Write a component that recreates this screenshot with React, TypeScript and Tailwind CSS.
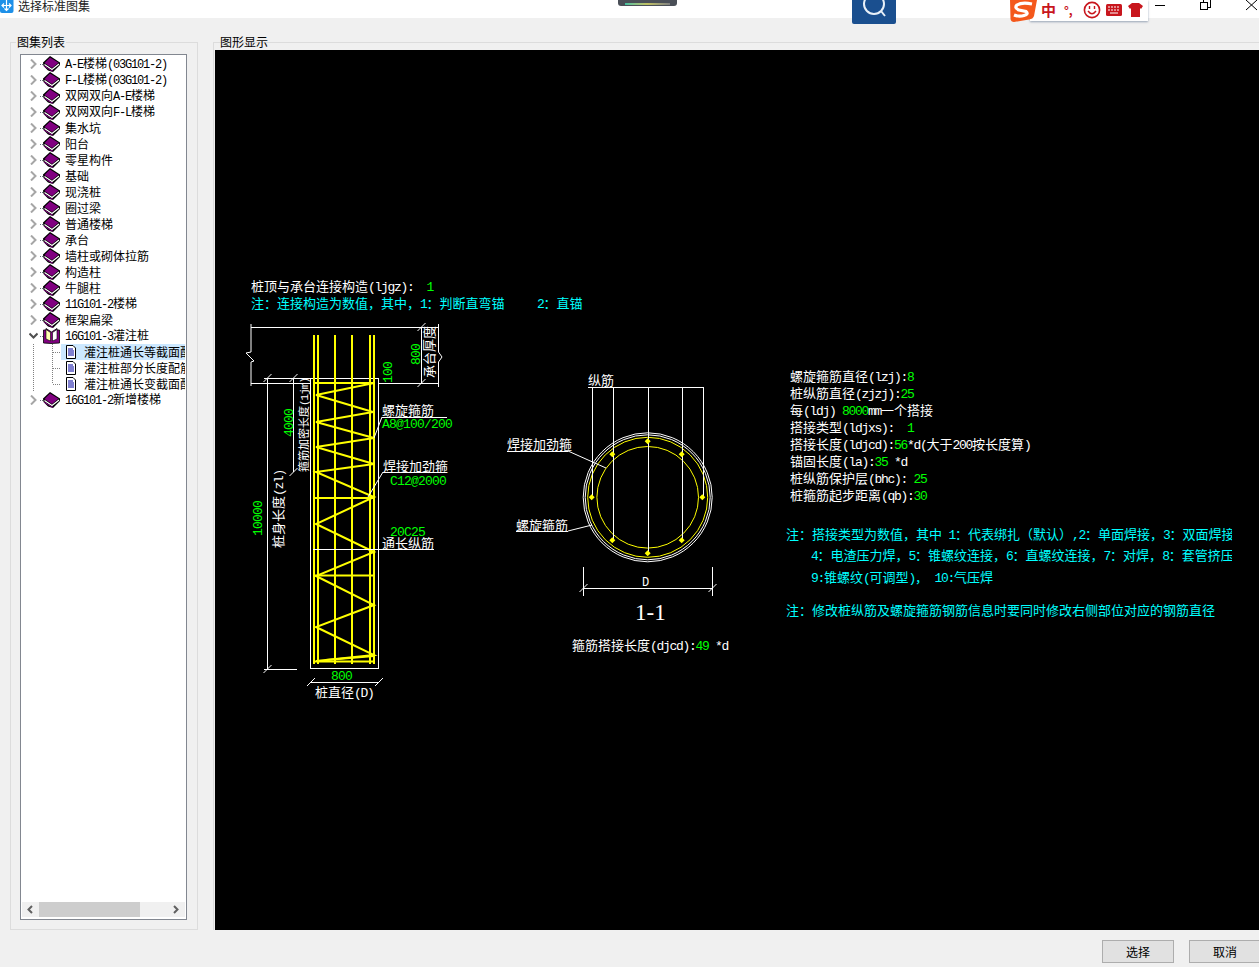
import React from "react";

const books = [
  "A-E楼梯(03G101-2)",
  "F-L楼梯(03G101-2)",
  "双网双向A-E楼梯",
  "双网双向F-L楼梯",
  "集水坑",
  "阳台",
  "零星构件",
  "基础",
  "现浇桩",
  "圈过梁",
  "普通楼梯",
  "承台",
  "墙柱或砌体拉筋",
  "构造柱",
  "牛腿柱",
  "11G101-2楼梯",
  "框架扁梁",
];

const leaves = ["灌注桩通长等截面配筋", "灌注桩部分长度配筋", "灌注桩通长变截面配筋"];

// SimSun style text: latin is half the width of a CJK glyph
const Runs = ({ text, small }: { text: string; small?: boolean }) => (
  <>
    {text.split(/([\x20-\x7e]+)/).map((run, i) =>
      run === "" ? null : /^[\x20-\x7e]/.test(run) ? (
        <span key={i} className={small ? "font-['Liberation_Mono'] text-[12px] tracking-[-1.2px]" : "font-['Liberation_Mono'] text-[13px] tracking-[-1.3px]"}>
          {run}
        </span>
      ) : (
        <span key={i}>{run}</span>
      )
    )}
  </>
);

const Chevron = ({ open }: { open?: boolean }) => (
  <svg width="9" height="10" viewBox="0 0 9 10" className="shrink-0">
    {open ? (
      <path d="M0.5 2.5 L4.5 6.5 L8.5 2.5" fill="none" stroke="#505050" strokeWidth="2" />
    ) : (
      <path d="M2 0.5 L6.5 5 L2 9.5" fill="none" stroke="#a6a6a6" strokeWidth="2" />
    )}
  </svg>
);

const BookIcon = () => (
  <svg width="17" height="16" viewBox="0 0 17 16" className="shrink-0">
    <path d="M7 0 L17 6.5 L17 9 L10 16 L5 14.5 L0.5 10 L0 6.5 Z" fill="#000" />
    <path d="M7 1.5 L15.5 6.8 L9 12 L1.5 7 Z" fill="#800080" />
    <path d="M1.5 8.5 L9 13.5 L16 8" fill="none" stroke="#fff" strokeWidth="1.2" />
    <path d="M1 10 L9 15 L10 15" fill="none" stroke="#800080" strokeWidth="1" />
  </svg>
);

const OpenBookIcon = () => (
  <svg width="17" height="16" viewBox="0 0 17 16" className="shrink-0">
    <path d="M0.5 2 L0.5 15 L8 15.5 L16.5 15 L16.5 2 L14 2 L14 0.5 L8.5 4 L3 0.5 L3 2 Z" fill="#800080" stroke="#000" strokeWidth="0.8" />
    <path d="M3 1.5 L7.5 4.5 L7.5 13 L3 11 Z" fill="#ffffb0" stroke="#000" strokeWidth="0.6" />
    <path d="M14 1.5 L9.5 4.5 L9.5 13 L14 11 Z" fill="#fff" stroke="#000" strokeWidth="0.6" />
  </svg>
);

const DocIcon = () => (
  <svg width="12" height="14" viewBox="0 0 12 14" className="shrink-0">
    <path d="M1.5 0.5 H8 L10.5 3 V13.5 H1.5 Z" fill="#fff" stroke="#000" />
    <path d="M3 4 H8 M3 6 H9 M3 8 H9 M3 10 H9" stroke="#0000a0" />
  </svg>
);

const Tree = () => (
  <div className="flex flex-col pt-[1px] text-[12px] leading-[16px] text-black">
    {books.map((name) => (
      <div key={name} className="flex h-[16px] items-center whitespace-pre pl-[8px]">
        <Chevron />
        <span className="ml-[2px] w-[3px] border-t border-dotted border-gray-500" />
        <BookIcon />
        <span className="ml-[5px]">
          <Runs text={name} small />
        </span>
      </div>
    ))}
    <div className="flex h-[16px] items-center whitespace-pre pl-[8px]">
      <Chevron open />
      <span className="ml-[2px] w-[3px] border-t border-dotted border-gray-500" />
      <OpenBookIcon />
      <span className="ml-[5px]">
        <Runs text="16G101-3灌注桩" small />
      </span>
    </div>
    {leaves.map((name, i) => (
      <div key={name} className="flex h-[16px] items-center whitespace-pre">
        <svg width="40" height="16" viewBox="0 0 40 16" className="shrink-0">
          <path d="M12.5 0 V16" stroke="#808080" strokeDasharray="1 1" />
          <path d={i === 2 ? "M31.5 0 V8" : "M31.5 0 V16"} stroke="#808080" strokeDasharray="1 1" />
          <path d="M32 8.5 H40" stroke="#808080" strokeDasharray="1 1" />
        </svg>
        <span className={i === 0 ? "flex h-[16px] w-[124px] items-center overflow-hidden bg-[#cce8ff] pl-[4px]" : "flex h-[16px] w-[124px] items-center overflow-hidden pl-[4px]"}>
          <DocIcon />
          <span className="ml-[7px]">{name}</span>
        </span>
      </div>
    ))}
    <div className="flex h-[16px] items-center whitespace-pre pl-[8px]">
      <Chevron />
      <span className="ml-[2px] w-[3px] border-t border-dotted border-gray-500" />
      <BookIcon />
      <span className="ml-[5px]">
        <Runs text="16G101-2新增楼梯" small />
      </span>
    </div>
  </div>
);

const zigzag =
  "374,383 316,395 373,412 316,422 374,438 316,447 374,464 316,472 374,497 316,524 374,552 316,576 374,605 316,627 374,655 316,661";

const rodDots = [
  [647.7, 441.3],
  [612.3, 454.3],
  [681.7, 454.3],
  [591.7, 497.3],
  [702.3, 497.3],
  [612.3, 540.3],
  [681.7, 540.3],
  [647.7, 553.3],
];

const CJK = "'Noto Sans CJK SC', sans-serif";
const MONO = "'Liberation Mono', monospace";

// tick across a dimension line end
const Tick = ({ x, y }: { x: number; y: number }) => <path d={`M${x - 4} ${y + 4} L${x + 4} ${y - 4}`} stroke="#fff" shapeRendering="auto" />;

const Drawing = () => (
  <svg className="absolute left-0 top-0" width="1044" height="880" viewBox="215 50 1044 880" shapeRendering="crispEdges">
    {/* pile cap */}
    <g fill="none" stroke="#fff">
      <path d="M251 324 V352 L246 353 L254 361 L251 362 V386" shapeRendering="auto" />
      <path d="M251 327.5 H438.5" />
      <path d="M251 383.5 H311 M379 383.5 H438.5" />
      <path d="M438.5 324 V352 L442 357 L438.5 362 V387" shapeRendering="auto" />
      <path d="M421.5 327 V383" />
      <rect x="310.5" y="378.5" width="68" height="290" />
      <path d="M264 378.5 H311 M267.5 378 V669 M264 669.5 H297 M293.5 378 V472" />
      <path d="M311 682.5 H379" />
    </g>
    <Tick x={421.5} y={327} />
    <Tick x={421.5} y={383} />
    <Tick x={267.5} y={378} />
    <Tick x={267.5} y={669} />
    <Tick x={293.5} y={378} />
    <Tick x={293.5} y={472} />
    <Tick x={311} y={682} />
    <Tick x={379} y={682} />

    {/* rebars */}
    <g stroke="#ffff00" strokeWidth="2" fill="none" shapeRendering="auto">
      <path d="M314 335 V664 M318 335 V664 M335 335 V664 M352 335 V664 M370 335 V664 M374 335 V664" />
      <path d="M314 383 H374 M314 498 H374 M314 575.5 H374 M314 661.5 H374" />
      <polyline points={zigzag} />
      <path d="M326 660 L374 656" />
    </g>

    {/* leaders */}
    <g stroke="#fff" fill="none">
      <path d="M382 417.5 H447 M382 417 L374 438" shapeRendering="auto" />
      <path d="M383 472.5 H447 M383 472 L368 497" shapeRendering="auto" />
      <path d="M313 549.5 H434" />
    </g>

    {/* section 1-1 */}
    <g fill="none" shapeRendering="auto">
      <circle cx="647.7" cy="497.3" r="64.5" stroke="#fff" />
      <circle cx="647.7" cy="497.3" r="62.5" stroke="#fff" />
      <circle cx="647.7" cy="497.3" r="60" stroke="#ffff00" />
      <circle cx="647.7" cy="497.3" r="50.8" stroke="#ffff00" />
    </g>
    <g stroke="#fff" fill="none">
      <path d="M588 387.5 H703.5 M592.5 387 V497 M613.5 387 V540 M648.5 387 V553 M682.5 387 V540 M703.5 387 V497" />
      <path d="M507 451.5 H568 M516 531.5 H568" />
      <path d="M568 451 L606 468 M568 531 L592 525" shapeRendering="auto" />
      <path d="M583.5 567 V596 M712.5 567 V596 M583 588.5 H713" />
    </g>
    <Tick x={583.5} y={588} />
    <Tick x={712.5} y={588} />
    {rodDots.map(([x, y]) => (
      <path key={`${x}-${y}`} d={`M${x} ${y - 3} L${x + 3} ${y} L${x} ${y + 3} L${x - 3} ${y} Z`} fill="#ffff00" shapeRendering="auto" />
    ))}

    {/* labels */}
    <g fontFamily={CJK} fontSize="13" fill="#fff">
      <text x="382" y="415">螺旋箍筋</text>
      <text x="383" y="471">焊接加劲箍</text>
      <text x="382" y="548">通长纵筋</text>
      <text x="315" y="697">桩直径<tspan fontFamily={MONO} letterSpacing="-1.3">(D)</tspan></text>
      <text x="588" y="385">纵筋</text>
      <text x="507" y="449">焊接加劲箍</text>
      <text x="516" y="530">螺旋箍筋</text>
      <text transform="translate(283 548) rotate(-90)">桩身长度<tspan fontFamily={MONO} letterSpacing="-1.3">(zl)</tspan></text>
      <text transform="translate(308 472) rotate(-90)" fontSize="11">箍筋加密长度<tspan fontFamily={MONO} letterSpacing="-1">(1jm)</tspan></text>
      <text transform="translate(434 378) rotate(-90)">承台厚度</text>
    </g>
    <g fontFamily={MONO} fontSize="13" letterSpacing="-0.8" fill="#00ff00">
      <text x="382" y="428">A8@100/200</text>
      <text x="390" y="485">C12@2000</text>
      <text x="390" y="536">20C25</text>
      <text x="331" y="680">800</text>
      <text transform="translate(420 365) rotate(-90)">800</text>
      <text transform="translate(392 383) rotate(-90)">100</text>
      <text transform="translate(293 437) rotate(-90)">4000</text>
      <text transform="translate(262 536) rotate(-90)">10000</text>
    </g>
    <text x="642" y="586" fontFamily={MONO} fontSize="12" fill="#fff">D</text>
    <text x="635" y="620" fontFamily="'Liberation Serif', serif" fontSize="23" fill="#fff">1-1</text>
  </svg>
);

const Line = ({ children, className }: { children: React.ReactNode; className: string }) => (
  <div className={`h-[17px] overflow-hidden whitespace-pre leading-[17px] ${className}`}>{children}</div>
);
const G = ({ children }: { children: string }) => <span className="text-[#00ff00]"><Runs text={children} /></span>;

const CanvasText = () => (
  <>
    <div className="absolute left-[36px] top-[227px] text-white">
      <Line className="">
        <Runs text="桩顶与承台连接构造(ljgz):  " />
        <G>1</G>
      </Line>
      <Line className="text-[#00ffff]">
        <Runs text="注：连接构造为数值，其中，1：判断直弯锚     2：直锚" />
      </Line>
    </div>

    <div className="absolute left-[575px] top-[317px] flex flex-col text-white">
      <Line className=""><Runs text="螺旋箍筋直径(lzj):" /><G>8</G></Line>
      <Line className=""><Runs text="桩纵筋直径(zjzj):" /><G>25</G></Line>
      <Line className=""><Runs text="每(ldj) " /><G>8000</G><Runs text="mm一个搭接" /></Line>
      <Line className=""><Runs text="搭接类型(ldjxs):  " /><G>1</G></Line>
      <Line className=""><Runs text="搭接长度(ldjcd):" /><G>56</G><Runs text="*d(大于200按长度算)" /></Line>
      <Line className=""><Runs text="锚固长度(la):" /><G>35</G><Runs text=" *d" /></Line>
      <Line className=""><Runs text="桩纵筋保护层(bhc): " /><G>25</G></Line>
      <Line className=""><Runs text="桩箍筋起步距离(qb):" /><G>30</G></Line>
    </div>

    <div className="absolute left-[571px] top-[475px] flex w-[446px] flex-col text-[#00ffff]">
      <Line className="mb-[4px]"><Runs text="注：搭接类型为数值，其中 1：代表绑扎（默认）,2：单面焊接，3：双面焊接" /></Line>
      <Line className="mb-[5px] pl-[25px]"><Runs text="4：电渣压力焊，5：锥螺纹连接，6：直螺纹连接，7：对焊，8：套管挤压" /></Line>
      <Line className="mb-[16px] pl-[25px]"><Runs text="9:锥螺纹(可调型)， 10:气压焊" /></Line>
      <Line className=""><Runs text="注：修改桩纵筋及螺旋箍筋钢筋信息时要同时修改右侧部位对应的钢筋直径" /></Line>
    </div>

    <div className="absolute left-[357px] top-[586px] whitespace-pre leading-[17px] text-white">
      <Runs text="箍筋搭接长度(djcd):" />
      <G>49</G>
      <Runs text=" *d" />
    </div>
  </>
);

// things from other windows lying over the title bar
const TopOverlays = () => (
  <>
    <div className="absolute left-[618px] top-0 flex h-[6px] w-[59px] items-end justify-center rounded-b-[3px] bg-[#4a4f57] pb-[1px]">
      <div className="h-[2px] w-[45px] bg-gradient-to-r from-[#40c0a0] via-[#c0c060] to-[#808080]" />
    </div>
    <div className="absolute left-[852px] top-0 h-[24px] w-[44px] overflow-hidden rounded-b-[2px] bg-[#1a4f8f]">
      <svg width="44" height="24" viewBox="0 0 44 24">
        <circle cx="22" cy="4" r="10" fill="none" stroke="#e8f0f8" strokeWidth="2" />
        <path d="M29 11 L33 16" stroke="#e8f0f8" strokeWidth="2" />
      </svg>
    </div>
    <div className="absolute left-[1030px] top-0 h-[21px] w-[118px] bg-white shadow-[0_1px_2px_rgba(90,110,140,0.6)]" />
    <div className="absolute left-[1041px] top-0 flex h-[19px] items-center">
      <span className="text-[15px] font-bold leading-none text-[#c8161d]">中</span>
      <span className="ml-[8px] text-[12px] font-bold leading-none text-[#c8161d]">°,</span>
      <svg width="18" height="18" viewBox="0 0 18 18" className="ml-[10px]">
        <circle cx="9" cy="9" r="7.6" fill="none" stroke="#c8161d" strokeWidth="1.6" />
        <path d="M6.5 5 V8 M11.5 5 V8" stroke="#c8161d" strokeWidth="1.4" />
        <path d="M5 10 Q9 15.5 13 10" fill="none" stroke="#c8161d" strokeWidth="1.4" />
      </svg>
      <svg width="16" height="12" viewBox="0 0 16 12" className="ml-[5px]">
        <rect width="16" height="12" rx="1.5" fill="#c8161d" />
        <path d="M2 3 H14 M2 6 H14" stroke="#fff" strokeDasharray="2 1" />
        <path d="M4 9 H12" stroke="#fff" />
      </svg>
      <svg width="15" height="16" viewBox="0 0 15 16" className="ml-[6px]">
        <path d="M4 1 H11 L15 4 L13 7 L12 6 V15 H3 V6 L2 7 L0 4 Z" fill="#c8161d" />
      </svg>
    </div>
    <svg className="absolute left-[1008px] top-0" width="30" height="23" viewBox="0 0 30 23">
      <path d="M2 0 H29 L26 16 Q25 19 21 19.5 L6 22 Q3 22 2.5 19 Z" fill="#f4581c" />
      <path d="M24 4 Q14 2 9 5 Q6 8 11 10 L18 11.5 Q21 14 16 15.5 Q11 17 6 15" fill="none" stroke="#fff" strokeWidth="3.2" />
    </svg>
    <svg className="absolute left-[1150px] top-0" width="109" height="14" viewBox="0 0 109 14" shapeRendering="crispEdges">
      <path d="M5 5.5 H15" stroke="#000" />
      <path d="M50.5 2.5 H57.5 V9.5 H50.5 Z M53 2 V0 M60 0 V7 H58" fill="none" stroke="#000" />
      <path d="M96 0 L107 10 M107 0 L96 10" stroke="#000" shapeRendering="auto" />
    </svg>
  </>
);

export default function App() {
  return (
    <div className="relative flex h-[967px] w-[1259px] flex-col overflow-hidden bg-[#f0f0f0] font-['Noto_Sans_CJK_SC',sans-serif] text-[13px]">
      {/* Title bar */}
      <div className="flex h-[18px] shrink-0 items-start overflow-hidden bg-white">
        <svg width="14" height="14" viewBox="0 0 14 14" className="shrink-0">
          <rect x="0" y="-3" width="13.5" height="16" rx="2" fill="#1e90e8" />
          <path d="M6.5 0 V10 M2 5.5 H11 M4 3.5 L2 5.5 L4 7.5 M9 3.5 L11 5.5 L9 7.5 M4.5 8.5 L6.5 10.5 L8.5 8.5" fill="none" stroke="#fff" strokeWidth="1.2" />
        </svg>
        <span className="ml-[4px] text-[12px] leading-[12px] text-[#222]">选择标准图集</span>
      </div>

      {/* Body */}
      <div className="flex h-[912px] shrink-0">
        <div className="relative ml-[10px] mt-[24px] h-[888px] w-[188px] border border-[#dcdcdc] px-[9px] pt-[11px]">
          <span className="absolute left-[5px] top-[-9px] bg-[#f0f0f0] px-[1px] text-[12px] leading-[16px] text-black">图集列表</span>
          <div className="flex h-[866px] w-[167px] flex-col overflow-hidden border border-[#828790] bg-white">
            <div className="flex-1 overflow-hidden">
              <Tree />
            </div>
            <div className="mb-[2px] ml-[1px] flex h-[15px] w-[163px] items-center bg-[#f0f0f0]">
              <svg width="17" height="15" viewBox="0 0 17 15" className="shrink-0">
                <path d="M10 4 L6.5 7.5 L10 11" fill="none" stroke="#606060" strokeWidth="2" />
              </svg>
              <div className="h-[15px] w-[101px] bg-[#cdcdcd]" />
              <div className="flex-1" />
              <svg width="17" height="15" viewBox="0 0 17 15" className="shrink-0">
                <path d="M6 4 L9.5 7.5 L6 11" fill="none" stroke="#606060" strokeWidth="2" />
              </svg>
            </div>
          </div>
        </div>

        <div className="relative ml-[15px] mt-[24px] h-[888px] flex-1 border-l border-t border-[#dcdcdc] pl-[1px] pt-[7px]">
          <span className="absolute left-[5px] top-[-9px] px-[1px] text-[12px] leading-[16px] text-black">图形显示</span>
          <div className="relative h-[880px] overflow-hidden bg-black">
            <Drawing />
            <CanvasText />
          </div>
        </div>
      </div>

      {/* Buttons */}
      <div className="mr-[-2px] flex justify-end gap-[15px] pt-[10px]">
        <button className="h-[23px] w-[72px] border border-[#adadad] bg-[#e1e1e1] text-[12px] leading-[21px] text-black">选择</button>
        <button className="h-[23px] w-[72px] border border-[#adadad] bg-[#e1e1e1] text-[12px] leading-[21px] text-black">取消</button>
      </div>

      <TopOverlays />
    </div>
  );
}
